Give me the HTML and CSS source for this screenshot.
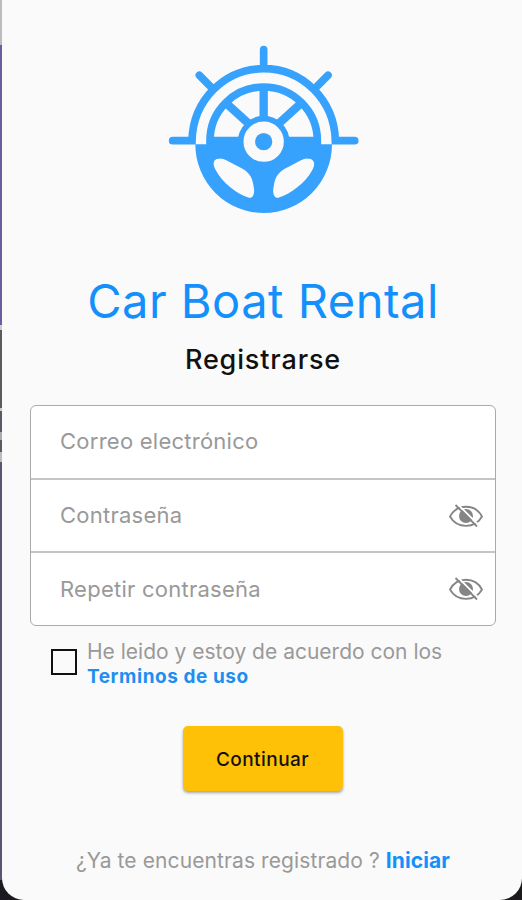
FILE: index.html
```html
<!DOCTYPE html>
<html lang="es">
<head>
    <meta charset="UTF-8">
    <meta name="viewport" content="width=device-width, initial-scale=1.0">
    <title>Car Boat Rental</title>
    <link rel="stylesheet" href="styles.css">
</head>
<body>
    <main class="screen">
        <svg class="logo" viewBox="0 0 630 570" fill="none" stroke="#36a2fe" stroke-width="23" stroke-linecap="round">
            <path d="M311 44V100M118 121L158 161M504 121L464 161M38 317H96C99 194 195 101 311 101S523 194 526 317H584"/>
            <path d="M106 328H516A205 206 0 0 1 106 328Z" fill="#36a2fe" stroke="none"/>
            <path d="M150 332V317A161 161 0 0 1 472 317V332" stroke-linecap="butt"/>
            <path d="M311 160V260M200 206L266 266M422 206L356 266M150 318H250M372 318H472" stroke-width="25" stroke-linecap="butt"/>
            <circle cx="311" cy="320" r="69" fill="#fafafa" stroke-width="17"/>
            <circle cx="311" cy="320" r="26" fill="#36a2fe" stroke="none"/>
            <path d="M178 371C160 371 156 385 167 405C187 443 231 478 267 488C278 491 284 477 282 461C278 431 272 416 249 402L199 376Q188 370 178 371ZM444 371C462 371 468 385 457 405C437 443 391 478 355 488C344 491 338 477 340 461C344 431 350 416 373 402L423 376Q434 370 444 371Z" fill="#fafafa" stroke="none"/>
        </svg>
        <h1>Car Boat Rental</h1>
        <h2>Registrarse</h2>

        <form id="registerForm">
            <div class="fields">
                <div class="field">
                    <input type="email" class="email" placeholder="Correo electrónico">
                </div>
                <div class="field">
                    <input type="password" class="password" placeholder="Contraseña">
                    <svg class="eye" viewBox="0 0 36 24" fill="none" stroke="#858585" stroke-width="1.8">
                        <path d="M2 12.5C9 -.5 27 -.5 34 12.5C27 25 9 25 2 12.5Z"/>
                        <circle cx="18" cy="12" r="7" fill="#858585" stroke="none"/>
                        <path d="M9.500 0L30.500 21" stroke="#fff"/>
                        <path d="M7.500 1L29 22.500"/>
                    </svg>
                </div>
                <div class="field">
                    <input type="password" class="repeat" placeholder="Repetir contraseña">
                    <svg class="eye" viewBox="0 0 36 24" fill="none" stroke="#858585" stroke-width="1.8">
                        <path d="M2 12.5C9 -.5 27 -.5 34 12.5C27 25 9 25 2 12.5Z"/>
                        <circle cx="18" cy="12" r="7" fill="#858585" stroke="none"/>
                        <path d="M9.500 0L30.500 21" stroke="#fff"/>
                        <path d="M7.500 1L29 22.500"/>
                    </svg>
                </div>
            </div>

            <div class="terms">
                <input type="checkbox" id="accept">
                <label for="accept"><span class="accept-text">He leido y estoy de acuerdo con los</span><a class="terms-link">Terminos de uso</a></label>
            </div>

            <button type="button">Continuar</button>
        </form>

        <p class="login"><span class="login-text">¿Ya te encuentras registrado ?</span> <a>Iniciar</a></p>
    </main>
</body>
</html>
```
FILE: styles.css
```css
body {
    font-family: Inter, sans-serif;
    margin: 0;
    height: 900px;
    padding-left: 2px;
    box-sizing: border-box;
    overflow: hidden;
    background: linear-gradient(#bbb 0 45px, #685fa0 45px 325px, #ccc 325px 330px, #5c5a5b 330px 408px, #ccc 408px 411px, #5b5963 411px 432px, #aaa 432px 440px, #5b5963 440px 452px, #bbb 452px 462px, #5b556f 462px 880px, #1c1a20 880px) 0 0 / 10px 900px no-repeat, #1c1a1c;
}

.screen {
    height: 900px;
    box-sizing: border-box;
    padding: 35px 26px 0 28px;
    background-color: #fafafa;
    border-radius: 0 0 22px 22px;
    display: flex;
    flex-direction: column;
    align-items: center;
}

.logo {
    width: 210px;
    height: 190px;
    margin-left: 4px;
}

h1 {
    margin: 47px 0 0;
    font-size: 47px;
    font-weight: 400;
    line-height: 58px;
    letter-spacing: 0.5px;
    color: #1390fb;
}

h2 {
    margin: 15px 0 0;
    font-size: 27px;
    font-weight: 500;
    line-height: 30px;
    letter-spacing: 0.85px;
    color: #111;
}

form {
    width: 466px;
    margin-top: 30px;
    display: flex;
    flex-direction: column;
    align-items: center;
}

.fields {
    width: 100%;
    height: 221px;
    box-sizing: border-box;
    border: 1.5px solid #aaa;
    border-radius: 6px;
    background-color: #fff;
    display: flex;
    flex-direction: column;
}

.field {
    flex: 1;
    display: flex;
    align-items: center;
    padding: 0 11px 0 29px;
}

.field + .field {
    border-top: 2px solid #c4c4c4;
}

.field input {
    flex: 1;
    min-width: 0;
    padding: 0 0 1px;
    border: none;
    outline: none;
    background: none;
    font: 22px Inter, sans-serif;
    letter-spacing: 0.25px;
}

.field input::placeholder {
    color: #999;
}

.eye {
    width: 36px;
    height: 24px;
}

.terms {
    align-self: flex-start;
    display: flex;
    align-items: center;
    gap: 10px;
    margin: 13px 0 0 21px;
}

.terms input {
    appearance: none;
    width: 26px;
    height: 26px;
    margin: 0 0 4px;
    border: 2px solid #111;
}

.terms label {
    display: flex;
    flex-direction: column;
    font-size: 21px;
    line-height: 25px;
    color: #999;
}

.terms-link {
    font-size: 19px;
    font-weight: 700;
    letter-spacing: 0.55px;
    color: #1e8ff0;
}

button {
    width: 160px;
    height: 65px;
    margin: 37px 1px 0 0;
    border: none;
    border-radius: 5px;
    background-color: #ffc107;
    box-shadow: 0 2px 3px rgba(0, 0, 0, 0.35);
    font: 500 19px Inter, sans-serif;
    letter-spacing: 0.45px;
    padding-top: 3px;
    color: #111;
    cursor: pointer;
}

.login {
    margin: 57px 0 0;
    font-size: 21px;
    line-height: 26px;
    letter-spacing: 0.1px;
    color: #999;
}

.login a {
    font-weight: 700;
    color: #1390fb;
}
```
